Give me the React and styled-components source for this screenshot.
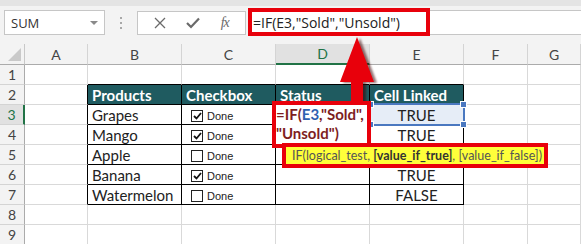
import React from 'react'
import styled, { createGlobalStyle } from 'styled-components'

const GlobalStyle = createGlobalStyle`
  html, body {
    margin: 0;
    padding: 0;
    background: #ffffff;
    overflow: hidden;
  }
`

const CELL_FONT = `Lato, 'Liberation Sans', sans-serif`
const UI_FONT = `'Open Sans', 'Noto Sans', 'Liberation Sans', sans-serif`

const Frame = styled.div`
  position: relative;
  width: 581px;
  height: 244px;
  overflow: hidden;
  background: #ffffff;
`

const Toolbar = styled.div`
  display: flex;
  align-items: flex-start;
  height: 44px;
  box-sizing: border-box;
  padding: 10px 0 0 4px;
  background: linear-gradient(#e4e4e4 0, #e4e4e4 6px, #f3f3f3 6px);
`

const NameBox = styled.div`
  display: flex;
  align-items: center;
  justify-content: space-between;
  width: 101px;
  height: 25px;
  box-sizing: border-box;
  padding: 0 6px 0 6px;
  background: #fff;
  border: 1px solid #c6c6c6;
  font-family: ${UI_FONT};
  font-size: 13px;
  color: #333;
`

const Caret = styled.span`
  width: 0;
  height: 0;
  border-left: 4px solid transparent;
  border-right: 4px solid transparent;
  border-top: 4px solid #8a8a8a;
`

const Grip = styled.div`
  display: flex;
  flex-direction: column;
  align-items: center;
  justify-content: center;
  gap: 3px;
  width: 32px;
  height: 25px;

  span {
    width: 2px;
    height: 2px;
    background: #a8a8a8;
  }
`

const FxBox = styled.div`
  display: flex;
  align-items: center;
  justify-content: space-around;
  width: 109px;
  height: 24px;
  margin-top: 1px;
  box-sizing: border-box;
  padding: 0 6px;
  background: #fff;
  border: 1px solid #c6c6c6;
`

const FxLabel = styled.span`
  font-family: 'Liberation Serif', serif;
  font-style: italic;
  font-size: 14px;
  color: #6a6a6a;
  letter-spacing: -1px;
`

const FormulaInput = styled.div`
  flex: 1;
  display: flex;
  align-items: center;
  height: 25px;
  margin-left: 2px;
  box-sizing: border-box;
  padding-left: 4px;
  background: #fff;
  border: 1px solid #c6c6c6;
  border-right: none;
  font-family: ${UI_FONT};
  font-size: 14px;
  color: #222;
  white-space: nowrap;
`

const Sheet = styled.div`
  display: grid;
  grid-template-columns: 25px 63px 94px 94px 94px 94px 64px 1fr;
  grid-template-rows: 21px repeat(9, 20px);
  font-family: ${CELL_FONT};
`

const Corner = styled.div`
  position: relative;
  box-sizing: border-box;
  background: #f3f3f3;
  border-right: 1px solid #c8c8c8;
  border-bottom: 1px solid #ababab;

  &::after {
    content: '';
    position: absolute;
    right: 3px;
    bottom: 3px;
    border-left: 13px solid transparent;
    border-bottom: 13px solid #c9c9c9;
  }
`

const ColHead = styled.div`
  display: flex;
  align-items: center;
  justify-content: center;
  box-sizing: border-box;
  font-size: 14px;
  color: ${({ $active }) => ($active ? '#217346' : '#444')};
  background: ${({ $active }) => ($active ? '#e1e1e1' : '#f3f3f3')};
  border-right: 1px solid #d4d4d4;
  border-bottom: ${({ $active }) => ($active ? '2px solid #217346' : '1px solid #ababab')};
`

const RowHead = styled.div`
  display: flex;
  align-items: center;
  justify-content: center;
  box-sizing: border-box;
  font-size: 14px;
  color: ${({ $active }) => ($active ? '#217346' : '#444')};
  background: ${({ $active }) => ($active ? '#e1e1e1' : '#f3f3f3')};
  border-bottom: 1px solid #d4d4d4;
  border-right: ${({ $active }) => ($active ? '2px solid #217346' : '1px solid #ababab')};
`

const Cell = styled.div`
  display: flex;
  align-items: center;
  justify-content: ${({ $align }) => ($align === 'center' ? 'center' : 'flex-start')};
  box-sizing: border-box;
  padding-left: ${({ $align }) => ($align === 'center' ? '0' : '4px')};
  font-size: 15px;
  font-weight: ${({ $head }) => ($head ? 700 : 400)};
  color: ${({ $head }) => ($head ? '#ffffff' : '#222')};
  background: ${({ $head, $selected }) => ($head ? '#1f5b60' : $selected ? '#e6edf7' : '#ffffff')};
  border-right: 1px solid ${({ $edgeRight }) => ($edgeRight ? '#000' : '#d9d9d9')};
  border-bottom: 1px solid ${({ $edgeBottom }) => ($edgeBottom ? '#000' : '#d9d9d9')};
  white-space: nowrap;
  overflow: hidden;
`

const CheckRow = styled.div`
  display: flex;
  align-items: center;
  gap: 4px;
  padding: 3px 0 0 5px;
  font-family: 'Liberation Sans', sans-serif;
  font-size: 11px;
  color: #222;
`

const Box = styled.span`
  display: flex;
  align-items: center;
  justify-content: center;
  width: 12px;
  height: 12px;
  box-sizing: border-box;
  border: 1px solid #222;
  background: #fff;
`

/* overlays */

const FormulaMark = styled.div`
  position: absolute;
  left: 248px;
  top: 8px;
  width: 182px;
  height: 28px;
  box-sizing: border-box;
  border: 4px solid #e8000b;
`

const Arrow = styled.svg`
  position: absolute;
  left: 334px;
  top: 34px;
  filter: drop-shadow(3px 1px 1px rgba(60, 0, 0, 0.55));
`

const Editor = styled.div`
  position: absolute;
  left: 272px;
  top: 101px;
  width: 99px;
  height: 47px;
  box-sizing: border-box;
  border: 4px solid #e8000b;
  background: #fff;
  font-family: ${CELL_FONT};
  font-size: 15px;
  font-weight: 700;
  line-height: 19px;
  color: #7e1e1e;
  white-space: nowrap;
  overflow: hidden;
`

const Ref = styled.span`
  color: #2e62b0;
`

const Selection = styled.div`
  position: absolute;
  left: 369px;
  top: 103px;
  width: 96px;
  height: 23px;
  box-sizing: border-box;
  border: 2px solid #4a78c0;
`

const Handle = styled.span`
  position: absolute;
  width: 5px;
  height: 5px;
  background: #4a78c0;
  border: 1px solid #fff;
  left: ${({ $x }) => $x};
  top: ${({ $y }) => $y};
`

const Tip = styled.div`
  position: absolute;
  left: 282px;
  top: 143px;
  width: 266px;
  height: 25px;
  box-sizing: border-box;
  display: flex;
  align-items: center;
  padding-left: 6px;
  border: 4px solid #e8000b;
  background: #ffff3a;
  font-family: Lato, 'Liberation Sans', sans-serif;
  font-size: 12.5px;
  color: #555;
  white-space: nowrap;
  overflow: hidden;

  b {
    font-weight: 700;
    color: #333;
  }
`

const columns = ['A', 'B', 'C', 'D', 'E', 'F', 'G']

// the E5 value sits under the function tooltip, so it is left out
const data = [
  ['Grapes', true, 'TRUE'],
  ['Mango', true, 'TRUE'],
  ['Apple', false, ''],
  ['Banana', true, 'TRUE'],
  ['Watermelon', false, 'FALSE'],
]

function Tick() {
  return (
    <svg width="9" height="8" viewBox="0 0 9 8">
      <path d="M1 4 L3.5 6.5 L8 1" fill="none" stroke="#111" strokeWidth="1.8" />
    </svg>
  )
}

function CheckCell({ checked, edgeBottom }) {
  return (
    <Cell $edgeRight $edgeBottom={edgeBottom}>
      <CheckRow>
        <Box>{checked && <Tick />}</Box>
        Done
      </CheckRow>
    </Cell>
  )
}

function SheetRow({ n }) {
  const cells = []
  const inTable = n >= 2 && n <= 7
  cells.push(
    <RowHead key="h" $active={n === 3}>
      {n}
    </RowHead>
  )
  cells.push(<Cell key="A" $edgeRight={inTable} />)

  if (n === 2) {
    ;['Products', 'Checkbox', 'Status', 'Cell Linked'].forEach((t) => (
      cells.push(
        <Cell key={t} $head $edgeRight $edgeBottom>
          {t}
        </Cell>
      )
    ))
  } else if (inTable) {
    const [name, checked, linked] = data[n - 3]
    cells.push(
      <Cell key="B" $edgeRight $edgeBottom>
        {name}
      </Cell>
    )
    cells.push(<CheckCell key="C" checked={checked} edgeBottom />)
    cells.push(<Cell key="D" $edgeRight $edgeBottom />)
    cells.push(
      <Cell key="E" $align="center" $edgeRight $edgeBottom $selected={n === 3}>
        {linked}
      </Cell>
    )
  } else {
    ;['B', 'C', 'D', 'E'].forEach((c) => cells.push(<Cell key={c} $edgeBottom={n === 1} />))
  }
  cells.push(<Cell key="F" />)
  cells.push(<Cell key="G" />)
  return cells
}

export default function App() {
  return (
    <Frame>
      <GlobalStyle />
      <Toolbar>
        <NameBox>
          SUM
          <Caret />
        </NameBox>
        <Grip>
          <span />
          <span />
          <span />
        </Grip>
        <FxBox>
          <svg width="12" height="12" viewBox="0 0 12 12">
            <path d="M1 1 L11 11 M11 1 L1 11" stroke="#6a6a6a" strokeWidth="1.3" />
          </svg>
          <svg width="14" height="12" viewBox="0 0 14 12">
            <path d="M1 6 L5 10 L13 1.5" fill="none" stroke="#6a6a6a" strokeWidth="2.2" />
          </svg>
          <FxLabel>fx</FxLabel>
        </FxBox>
        <FormulaInput>=IF(E3,"Sold","Unsold")</FormulaInput>
      </Toolbar>

      <Sheet>
        <Corner />
        {columns.map((c) => (
          <ColHead key={c} $active={c === 'D'}>
            {c}
          </ColHead>
        ))}
        {[1, 2, 3, 4, 5, 6, 7, 8, 9].map((n) => (
          <SheetRow key={n} n={n} />
        ))}
      </Sheet>

      <FormulaMark />
      <Arrow width="46" height="70" viewBox="0 0 46 70">
        <polygon points="23,3 6,48 17,48 17,68 29,68 29,48 40,48" fill="#e8000b" />
      </Arrow>

      <Selection>
        <Handle $x="-4px" $y="-4px" />
        <Handle $x="89px" $y="-4px" />
        <Handle $x="-4px" $y="16px" />
        <Handle $x="89px" $y="16px" />
      </Selection>

      <Editor>
        =IF(<Ref>E3</Ref>,"Sold",
        <br />
        "Unsold")
      </Editor>

      <Tip>
        IF(logical_test,&nbsp;<b>[value_if_true]</b>, [value_if_false])
      </Tip>
    </Frame>
  )
}
